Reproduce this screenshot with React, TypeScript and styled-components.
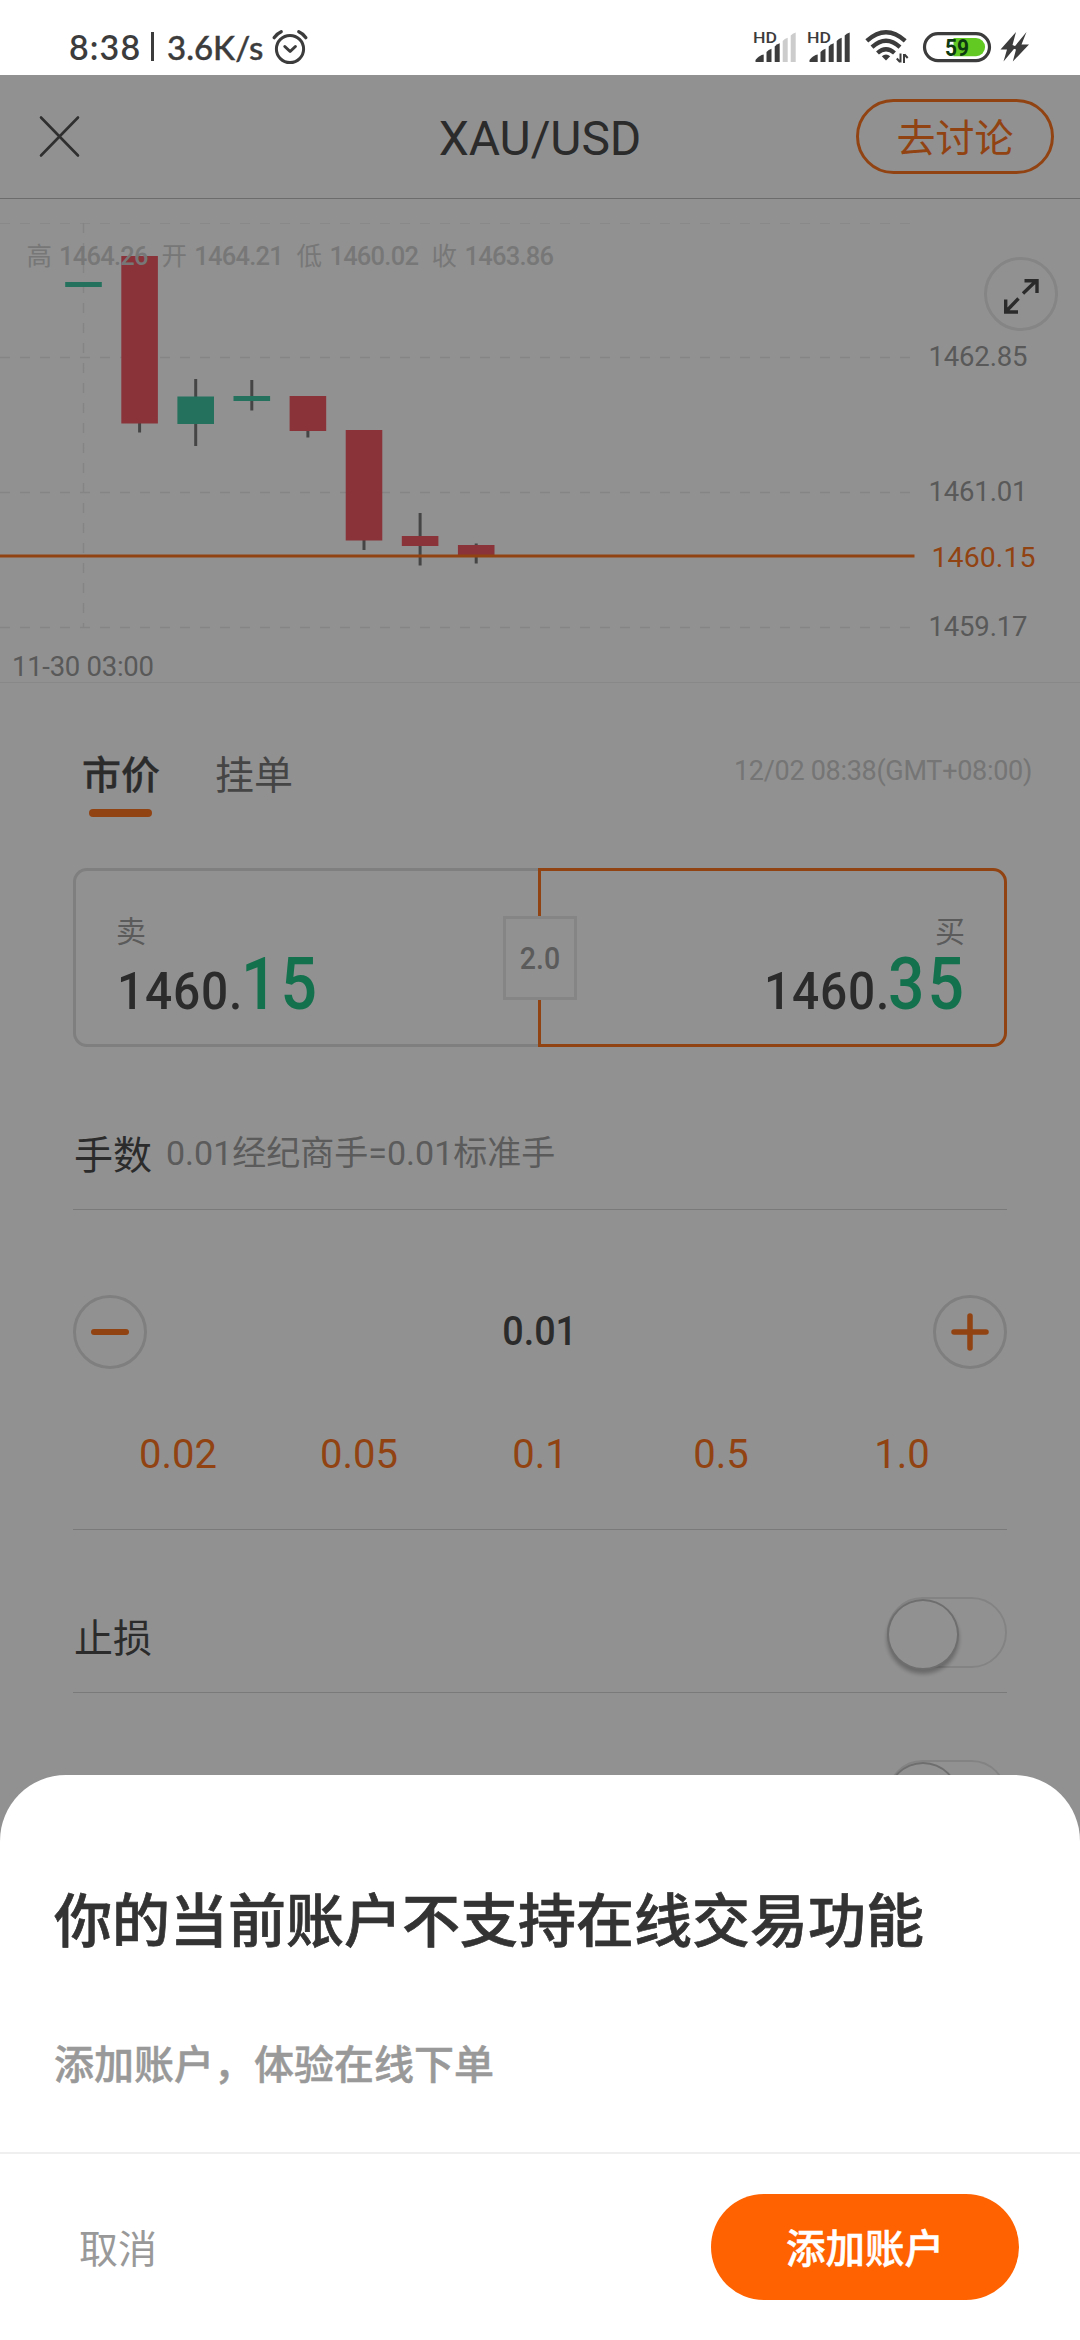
import React from "react";
import styled, { createGlobalStyle } from "styled-components";

const SANS = `Roboto, "Noto Sans CJK SC", sans-serif`;
const CJK = `"Noto Sans CJK SC", sans-serif`;
const ORANGE = "#ff6200";

const GlobalStyle = createGlobalStyle`
  * { box-sizing: border-box; }
  body { margin: 0; background: #fff; font-family: ${SANS}; color: #333; }
  button { font: inherit; color: inherit; background: none; border: 0; padding: 0; margin: 0; }
  svg { display: block; overflow: visible; }
`;

const Screen = styled.div`
  width: 1080px;
  height: 2340px;
  display: flex;
  flex-direction: column;
  overflow: hidden;
  background: #fff;
`;

/* ---------- status bar ---------- */
const StatusBar = styled.header`
  height: 75px;
  padding: 18px 51px 0 69px;
  display: flex;
  align-items: center;
  justify-content: space-between;
  color: #3c3c3c;
`;
const StatusGroup = styled.div`
  display: flex;
  align-items: center;
`;
const Clock = styled.span`
  font: 600 34px/40px Lato, sans-serif;
  letter-spacing: 1.1px;
  width: 82px;
`;
const Divider = styled.i`
  width: 3px;
  height: 29px;
  background: #3c3c3c;
  margin-right: 13px;
`;
const NetSpeed = styled.span`
  font: 500 33px/40px Lato, sans-serif;
  letter-spacing: 0;
  -webkit-text-stroke: 0.4px #3c3c3c;
  width: 105px;
`;
const Gap = styled.i<{ $w: number }>`
  width: ${(p) => p.$w}px;
`;
const HdLabel = styled.text`
  font: 500 15.5px Roboto, sans-serif;
  fill: #3c3c3c;
`;
const BatteryLabel = styled.text`
  font: 700 24px Roboto, sans-serif;
  fill: #0d3a10;
`;

/* ---------- page ---------- */
const Body = styled.div`
  position: relative;
  flex: 1;
  overflow: hidden;
`;
const TitleBar = styled.div`
  height: 124px;
  display: grid;
  grid-template-columns: 1fr auto 1fr;
  align-items: center;
  padding: 0 26px;
  border-bottom: 1px solid #b4b4b4;
`;
const CloseIcon = styled.svg`
  margin-left: 14px;
`;
const Title = styled.h1`
  margin: 0;
  padding-top: 4px;
  font: 400 48px/60px ${SANS};
  letter-spacing: -0.1px;
`;
const DiscussButton = styled.button`
  justify-self: end;
  width: 198px;
  height: 75px;
  border: 3px solid ${ORANGE};
  border-radius: 38px;
  color: ${ORANGE};
  font: 400 39px/63px ${CJK};
  padding-bottom: 3px;
`;
const ChartPanel = styled.section`
  position: relative;
  height: 484px;
  border-bottom: 1px solid #ececec;
`;
const ExpandButton = styled.button`
  position: absolute;
  right: 22px;
  top: 58px;
  width: 74px;
  height: 74px;
  padding: 4px 1px 0 0;
  border: 3px solid #e6e6e6;
  border-radius: 50%;
  background: #fff;
  display: grid;
  place-items: center;
`;
const AxisText = styled.text<{ $active?: boolean }>`
  font: 400 ${(p) => (p.$active ? 28.5 : 27.5)}px Roboto, sans-serif;
  fill: ${(p) => (p.$active ? ORANGE : "#8e8e8e")};
`;
const LegendText = styled.text`
  font: 500 25.5px ${SANS};
  fill: #cbcbcb;
`;
const LegendLabel = styled.text`
  font: 400 25.5px ${CJK};
  fill: #cbcbcb;
`;

const TabRow = styled.div`
  display: flex;
  align-items: flex-start;
  height: 185px;
  padding: 60px 48px 0 82px;
`;
const Tab = styled.div<{ $active?: boolean }>`
  display: flex;
  flex-direction: column;
  align-items: center;
  margin-right: 55px;
  font: ${(p) => (p.$active ? 500 : 400)} 39px/58px ${CJK};
  color: ${(p) => (p.$active ? "#333" : "#666")};
  -webkit-text-stroke: ${(p) => (p.$active ? "0.3px #333" : "0")};
  &::after {
    content: "";
    width: 63px;
    height: 8px;
    margin: 8px 2px 0 0;
    border-radius: 4px;
    background: ${(p) => (p.$active ? ORANGE : "transparent")};
  }
`;
const Stamp = styled.time`
  margin-left: auto;
  font-size: 27px;
  letter-spacing: -0.3px;
  line-height: 32px;
  margin-top: 12px;
  color: #c6c6c6;
`;

const Form = styled.main`
  padding: 0 73px;
`;
const Quotes = styled.div`
  position: relative;
  display: flex;
  height: 179px;
`;
const Quote = styled.div<{ $selected?: boolean }>`
  flex: 1;
  display: flex;
  flex-direction: column;
  align-items: ${(p) => (p.$selected ? "flex-end" : "flex-start")};
  padding: 36px 40px 0 41px;
  border: 3px solid ${(p) => (p.$selected ? ORANGE : "#dadada")};
  border-radius: ${(p) => (p.$selected ? "0 14px 14px 0" : "14px 0 0 14px")};
  ${(p) => (p.$selected ? "margin-left: -2px;" : "border-right: 0;")}
`;
const Side = styled.span`
  font: 400 30px/44px ${CJK};
  margin: 0 -1px;
  color: #929292;
`;
const Price = styled.div`
  display: flex;
  align-items: baseline;
  line-height: 64px;
  padding-top: 1px;
  white-space: nowrap;
`;
const Whole = styled.span`
  width: 124px;
  font-size: 52px;
  font-weight: 500;
  letter-spacing: 0.9px;
  transform: scaleX(0.92);
  transform-origin: left;
`;
const Pips = styled.span`
  width: 76px;
  font-size: 73px;
  font-weight: 500;
  letter-spacing: 3.5px;
  color: #05be78;
  transform: scaleX(0.88);
  transform-origin: left;
`;
const Spread = styled.span`
  position: absolute;
  left: 430px;
  top: 48px;
  width: 74px;
  height: 84px;
  border: 3px solid #e6e6e6;
  background: #fff;
  display: grid;
  place-items: center;
  color: #929292;
`;
const SpreadValue = styled.span`
  font: 500 31px/40px ${SANS};
  transform: scaleX(0.92);
  padding-top: 1px;
`;
const LotsHead = styled.div`
  display: flex;
  align-items: center;
  height: 163px;
  padding: 48px 0 0 1px;
  border-bottom: 1px solid #d0d0d0;
`;
const FieldLabel = styled.span`
  font: 400 39px/58px ${CJK};
`;
const Hint = styled.span`
  margin-left: 14px;
  padding-top: 2px;
  font-size: 34px;
  line-height: 50px;
  color: #929292;
`;
const Lots = styled.div`
  height: 320px;
  padding-top: 85px;
  border-bottom: 1px solid #d0d0d0;
`;
const Stepper = styled.div`
  display: flex;
  align-items: center;
  justify-content: space-between;
`;
const RoundButton = styled.button`
  width: 74px;
  height: 74px;
  border: 3px solid #dadada;
  border-radius: 50%;
  display: grid;
  place-items: center;
`;
const LotValue = styled.span`
  font: 500 41px/50px ${SANS};
  padding-bottom: 2px;
  transform: scaleX(0.92);
`;
const Presets = styled.div`
  display: grid;
  grid-template-columns: repeat(5, 181px);
  justify-content: center;
  margin-top: 61px;
  text-align: center;
  color: ${ORANGE};
  font-size: 40px;
  line-height: 50px;
`;
const SwitchRow = styled.div`
  height: 163px;
  padding: 67px 0 0 1px;
  display: flex;
  align-items: flex-start;
  justify-content: space-between;
  border-bottom: 1px solid #d0d0d0;
  ${FieldLabel} {
    margin-top: 9px;
  }
`;
const Switch = styled.i`
  width: 120px;
  height: 71px;
  border: 2px solid #e3e3e3;
  border-radius: 36px;
  &::before {
    content: "";
    display: block;
    width: 68px;
    height: 67px;
    margin: 0 0 0 -2px;
    border: 2px solid #b8b8b8;
    border-radius: 50%;
    background: #fff;
    box-shadow: 0 4px 4px rgba(0, 0, 0, 0.32);
  }
`;

/* ---------- dialog ---------- */
const Overlay = styled.div`
  position: absolute;
  inset: 0;
  background: rgba(36, 36, 36, 0.5);
  display: flex;
  align-items: flex-end;
`;
const Sheet = styled.div`
  width: 100%;
  height: 565px;
  border-radius: 66px 66px 0 0;
  background: #fff;
`;
const SheetText = styled.div`
  height: 379px;
  padding: 99px 54px 0;
  border-bottom: 2px solid #efefef;
`;
const SheetTitle = styled.h2`
  margin: 0;
  font: 500 58px/86px ${CJK};
  -webkit-text-stroke: 0.7px #333;
`;
const SheetSub = styled.p`
  margin: 72px 0 0;
  font: 500 40px/60px ${CJK};
  color: #999;
  -webkit-text-stroke: 0.5px #999;
`;
const SheetActions = styled.div`
  display: flex;
  align-items: center;
  justify-content: space-between;
  padding: 40px 61px 0 79px;
`;
const CancelButton = styled.button`
  font: 400 39px/58px ${CJK};
  color: #999;
  padding-bottom: 2px;
`;
const AddButton = styled.button`
  width: 308px;
  height: 106px;
  border-radius: 53px;
  background: ${ORANGE};
  color: #fff;
  font: 500 39.5px/100px ${CJK};
  padding-bottom: 2px;
  -webkit-text-stroke: 0.5px #fff;
`;

const AlarmIcon = () => (
  <svg width="36" height="36" viewBox="272 29 36 36" fill="none" stroke="#3c3c3c" strokeWidth="3" strokeLinecap="round">
    <circle cx="290" cy="49" r="13.6" />
    <path d="M284.8 46.5l5.3 5 5.3-5" strokeLinejoin="round" />
    <path d="M274.2 37.6q2.5-3.8 7-5.8M298.8 31.8q4.500 2 7 5.800" strokeWidth="3.4" />
  </svg>
);

const BARS = [
  "M0 29.500V27.500Q4 22.500 8.200 22V29.500Z",
  "M11 29.500V19.500Q13 17 16 16.200V29.500Z",
  "M19.200 29.500V14Q21 11.500 24.200 10.700V29.500Z",
  "M27.200 29.500V8.500Q29 6 32.200 5.200V29.500Z",
  "M35.200 29.500V3Q37 .8 40.200 0V29.500Z",
];
const SignalIcon = ({ level }: { level: number }) => (
  <svg width="43" height="32" viewBox="-1.500 -1.500 43 32">
    {BARS.map((d, i) => (
      <path key={i} d={d} fill={i < level ? "#3c3c3c" : "#cccccc"} />
    ))}
    <HdLabel x="-2.500" y="10.300" textLength="24" lengthAdjust="spacingAndGlyphs">HD</HdLabel>
  </svg>
);

const WifiIcon = () => (
  <svg width="44" height="36" viewBox="864 31 44 36" fill="none" stroke="#3c3c3c" strokeWidth="4.300">
    <path d="M865.800 42.800Q885 25.500 904.200 42.800" />
    <path d="M871 49.200Q885 36.500 899 49.200" />
    <path d="M876.500 55Q885 47.500 893.500 55" />
    <path d="M880.800 58.200Q885 54.800 889.200 58.200L885 62.600Z" fill="#3c3c3c" stroke="none" />
    <path d="M899.500 55.500V64.500M895.800 60.500L899 64M903 65V56M906.700 60L903.500 56.500" strokeWidth="2" />
  </svg>
);

const BatteryIcon = () => (
  <svg width="69" height="32" viewBox="921.500 31 69 32">
    <rect x="924" y="33.600" width="65" height="27" rx="13.500" fill="#fff" stroke="#3c3c3c" strokeWidth="3.200" />
    <path d="M953 38H975.500a9 9 0 0 1 0 18.200H953Z" fill="#62c923" />
    <BatteryLabel x="944.500" y="56" textLength="24" lengthAdjust="spacingAndGlyphs">59</BatteryLabel>
  </svg>
);

const BoltIcon = () => (
  <svg width="29" height="32" viewBox="1000 31 29 32" fill="#3c3c3c">
    <path d="M1016 32L1000.500 49.500H1007L1003.500 61.500L1016 46.500L1012.500 45Z" />
    <path d="M1026.500 32L1013 48.500L1016 49.500L1012.800 61.500L1029 44.500H1021.500Z" />
  </svg>
);

type Candle = { up?: boolean; top: number; bottom: number; high: number; low: number };
const CANDLES: Candle[] = [
  { up: true, top: 282, bottom: 287, high: 282, low: 287 },
  { top: 256, bottom: 423.5, high: 256, low: 432.500 },
  { up: true, top: 396.5, bottom: 424, high: 379, low: 446 },
  { up: true, top: 396, bottom: 401, high: 380, low: 410.500 },
  { top: 396, bottom: 431, high: 396, low: 437.500 },
  { top: 430, bottom: 540.5, high: 430, low: 550 },
  { top: 536, bottom: 546, high: 513, low: 565.500 },
  { top: 545, bottom: 557, high: 543.5, low: 563.500 },
];
const GRID = [357.5, 492.5, 627.5];
const LEGEND = [
  ["高", "1464.26"],
  ["开", "1464.21"],
  ["低", "1460.02"],
  ["收", "1463.86"],
];
const AXIS: [string, number][] = [
  ["1462.85", 365.7],
  ["1461.01", 501],
  ["1459.17", 635.7],
];

const CandleChart = () => (
  <svg width="1080" height="483" viewBox="0 199 1080 483">
    <g stroke="#e6e6e6" strokeWidth="1.500" strokeDasharray="10 10">
      <line x1="0" x2="911" y1="223.500" y2="223.500" stroke="#eeeeee" strokeWidth="1" />
      {GRID.map((y) => (
        <line key={y} x1="0" x2="911" y1={y} y2={y} />
      ))}
      <line x1="83.500" x2="83.500" y1="223" y2="628" />
    </g>
    {CANDLES.map((c, i) => {
      const x = 83.5 + i * 56.1;
      return (
        <g key={i}>
          <line x1={x} x2={x} y1={c.high} y2={c.low} stroke="#666" strokeWidth="3" />
          <rect x={x - 18.3} y={c.top} width="36.600" height={c.bottom - c.top} fill={c.up ? "#25be96" : "#f04450"} />
        </g>
      );
    })}
    <rect x="0" y="554.500" width="914.500" height="3" fill={ORANGE} />
    {LEGEND.map(([label, value], i) => (
      <g key={label}>
        <LegendLabel x={26.500 + i * 135} y="265">{label}</LegendLabel>
        <LegendText x={59 + i * 135.2} y="264.500" textLength="89.500">{value}</LegendText>
      </g>
    ))}
    {AXIS.map(([value, y]) => (
      <AxisText key={value} x="928.500" y={y} textLength="99">{value}</AxisText>
    ))}
    <AxisText $active x="931.500" y="567" textLength="104">1460.15</AxisText>
    <AxisText x="12" y="676" textLength="142">11-30 03:00</AxisText>
  </svg>
);

export default function App() {
  return (
    <Screen>
      <GlobalStyle />
      <StatusBar>
        <StatusGroup>
          <Clock>8:38</Clock>
          <Divider />
          <NetSpeed>3.6K/s</NetSpeed>
          <AlarmIcon />
        </StatusGroup>
        <StatusGroup>
          <SignalIcon level={3} />
          <Gap $w={11} />
          <SignalIcon level={5} />
          <Gap $w={14} />
          <WifiIcon />
          <Gap $w={13} />
          <BatteryIcon />
          <Gap $w={9} />
          <BoltIcon />
        </StatusGroup>
      </StatusBar>

      <Body>
        <TitleBar>
          <CloseIcon width="40" height="42" viewBox="0 0 40 42" stroke="#3a3a3a" strokeWidth="2.600" strokeLinecap="round">
            <path d="M1 1.500L38 39.500M38 1.500L1 39.500" />
          </CloseIcon>
          <Title>XAU/USD</Title>
          <DiscussButton>去讨论</DiscussButton>
        </TitleBar>

        <ChartPanel>
          <CandleChart />
          <ExpandButton>
            <svg width="36" height="36" viewBox="0 0 36 36" fill="none" stroke="#333" strokeWidth="3.400">
              <path d="M20 15.500L33.500 2.500M21.500 2.700H34V15M15.500 20.500L2.500 34M2.700 21.500V34H15" />
            </svg>
          </ExpandButton>
        </ChartPanel>

        <TabRow>
          <Tab $active>市价</Tab>
          <Tab>挂单</Tab>
          <Stamp>12/02 08:38(GMT+08:00)</Stamp>
        </TabRow>

        <Form>
          <Quotes>
            <Quote>
              <Side>卖</Side>
              <Price><Whole>1460.</Whole><Pips>15</Pips></Price>
            </Quote>
            <Quote $selected>
              <Side>买</Side>
              <Price><Whole>1460.</Whole><Pips>35</Pips></Price>
            </Quote>
            <Spread><SpreadValue>2.0</SpreadValue></Spread>
          </Quotes>
          <LotsHead>
            <FieldLabel>手数</FieldLabel>
            <Hint>0.01经纪商手=0.01标准手</Hint>
          </LotsHead>
          <Lots>
            <Stepper>
              <RoundButton>
                <svg width="38" height="38" viewBox="0 0 38 38" stroke={ORANGE} strokeWidth="6" strokeLinecap="round">
                  <path d="M3 19H35" />
                </svg>
              </RoundButton>
              <LotValue>0.01</LotValue>
              <RoundButton>
                <svg width="38" height="38" viewBox="0 0 38 38" stroke={ORANGE} strokeWidth="5.500" strokeLinecap="round">
                  <path d="M3 19H35M19 3V35" />
                </svg>
              </RoundButton>
            </Stepper>
            <Presets>
              {["0.02", "0.05", "0.1", "0.5", "1.0"].map((v) => (
                <span key={v}>{v}</span>
              ))}
            </Presets>
          </Lots>
          <SwitchRow>
            <FieldLabel>止损</FieldLabel>
            <Switch />
          </SwitchRow>
          <SwitchRow>
            <span />
            <Switch />
          </SwitchRow>
        </Form>

        <Overlay>
          <Sheet>
            <SheetText>
              <SheetTitle>你的当前账户不支持在线交易功能</SheetTitle>
              <SheetSub>添加账户，体验在线下单</SheetSub>
            </SheetText>
            <SheetActions>
              <CancelButton>取消</CancelButton>
              <AddButton>添加账户</AddButton>
            </SheetActions>
          </Sheet>
        </Overlay>
      </Body>
    </Screen>
  );
}
